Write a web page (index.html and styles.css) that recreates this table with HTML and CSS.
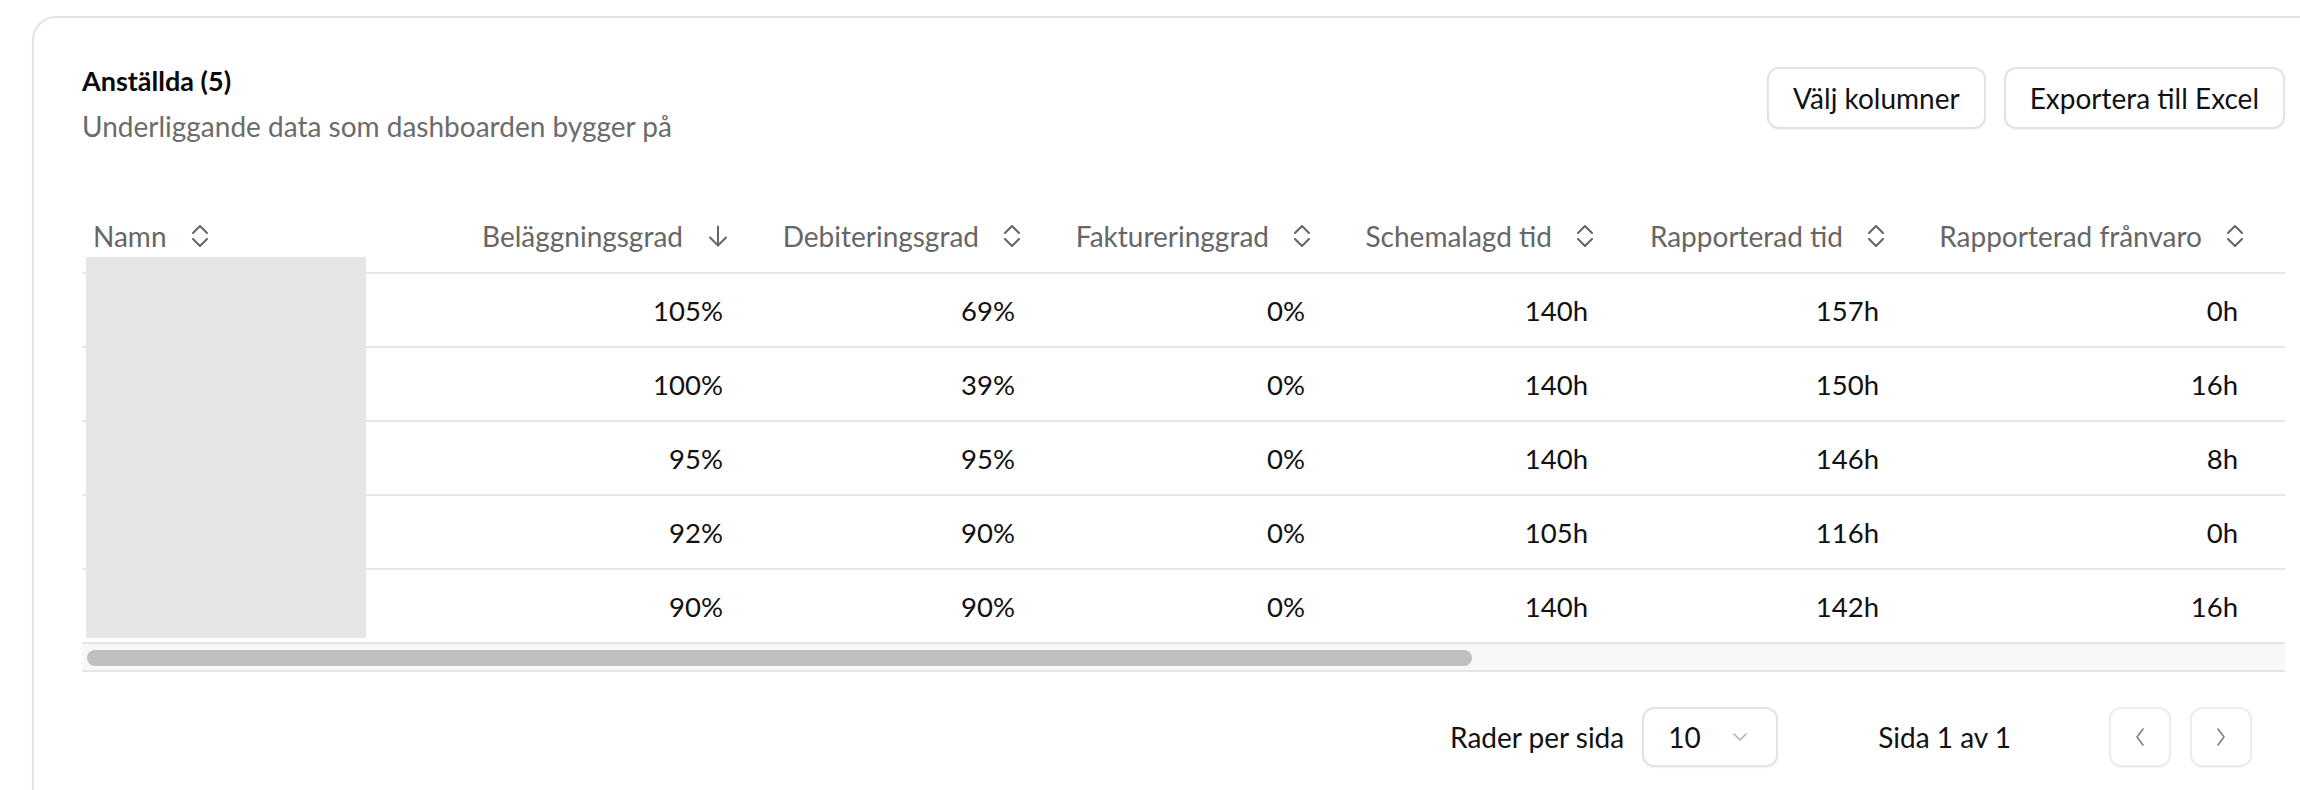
FILE: index.html
```html
<!DOCTYPE html>
<html lang="sv">
<head>
<meta charset="utf-8">
<title>Anställda</title>
<link rel="stylesheet" href="styles.css">
</head>
<body>
<div class="page">
  <section class="card">
    <header class="card-head">
      <div class="heading">
        <h2 class="title">Anställda (5)</h2>
        <p class="subtitle">Underliggande data som dashboarden bygger på</p>
      </div>
      <div class="actions">
        <button class="btn">Välj kolumner</button>
        <button class="btn">Exportera till Excel</button>
      </div>
    </header>

    <div class="table-wrap">
      <div class="scroller">
        <div class="row head-row">
          <div class="hcell name">Namn <svg class="ico-sort" viewBox="0 0 18 24"><polyline points="2,9 9,2 16,9"/><polyline points="2,15 9,22 16,15"/></svg></div>
          <div class="hcell">Beläggningsgrad <svg class="ico-arrow" viewBox="0 0 22 22"><line x1="11" y1="1.5" x2="11" y2="20.5"/><polyline points="3,12.5 11,20.5 19,12.5"/></svg></div>
          <div class="hcell">Debiteringsgrad <svg class="ico-sort" viewBox="0 0 18 24"><polyline points="2,9 9,2 16,9"/><polyline points="2,15 9,22 16,15"/></svg></div>
          <div class="hcell">Faktureringgrad <svg class="ico-sort" viewBox="0 0 18 24"><polyline points="2,9 9,2 16,9"/><polyline points="2,15 9,22 16,15"/></svg></div>
          <div class="hcell">Schemalagd tid <svg class="ico-sort" viewBox="0 0 18 24"><polyline points="2,9 9,2 16,9"/><polyline points="2,15 9,22 16,15"/></svg></div>
          <div class="hcell">Rapporterad tid <svg class="ico-sort" viewBox="0 0 18 24"><polyline points="2,9 9,2 16,9"/><polyline points="2,15 9,22 16,15"/></svg></div>
          <div class="hcell">Rapporterad frånvaro <svg class="ico-sort" viewBox="0 0 18 24"><polyline points="2,9 9,2 16,9"/><polyline points="2,15 9,22 16,15"/></svg></div>
          <div class="hcell"></div>
        </div>
        <div class="row"><div class="cell"></div><div class="cell">105%</div><div class="cell">69%</div><div class="cell">0%</div><div class="cell">140h</div><div class="cell">157h</div><div class="cell">0h</div><div class="cell"></div></div>
        <div class="row"><div class="cell"></div><div class="cell">100%</div><div class="cell">39%</div><div class="cell">0%</div><div class="cell">140h</div><div class="cell">150h</div><div class="cell">16h</div><div class="cell"></div></div>
        <div class="row"><div class="cell"></div><div class="cell">95%</div><div class="cell">95%</div><div class="cell">0%</div><div class="cell">140h</div><div class="cell">146h</div><div class="cell">8h</div><div class="cell"></div></div>
        <div class="row"><div class="cell"></div><div class="cell">92%</div><div class="cell">90%</div><div class="cell">0%</div><div class="cell">105h</div><div class="cell">116h</div><div class="cell">0h</div><div class="cell"></div></div>
        <div class="row"><div class="cell"></div><div class="cell">90%</div><div class="cell">90%</div><div class="cell">0%</div><div class="cell">140h</div><div class="cell">142h</div><div class="cell">16h</div><div class="cell"></div></div>
      </div>
      <div class="redact"></div>
      <div class="hscroll"><div class="thumb"></div></div>
    </div>

    <footer class="pager">
      <span class="pager-label">Rader per sida</span>
      <div class="select"><span>10</span><svg class="ico-down" viewBox="0 0 14 8"><polyline points="1,1 7,7 13,1"/></svg></div>
      <span class="page-info">Sida 1 av 1</span>
      <div class="nav">
        <button class="nav-btn" aria-label="Föregående"><svg viewBox="0 0 10 18"><polyline points="8,1 2,9 8,17"/></svg></button>
        <button class="nav-btn" aria-label="Nästa"><svg viewBox="0 0 10 18"><polyline points="2,1 8,9 2,17"/></svg></button>
      </div>
    </footer>
  </section>
</div>
</body>
</html>
```

FILE: styles.css
```css
html, body {
  margin: 0;
  padding: 0;
  overflow: hidden;
  background: #ffffff;
  font-family: Lato, "Noto Sans", sans-serif;
  color: #111111;
}

.page {
  padding: 16px 0 0 32px;
}

.card {
  width: 2303px;
  box-sizing: border-box;
  border: 2px solid #e3e3e3;
  border-radius: 24px;
  padding: 45px 48px 60px 48px;
  background: #ffffff;
  box-shadow: 0 1px 3px rgba(0, 0, 0, 0.04);
}

.card-head {
  display: flex;
  justify-content: space-between;
  align-items: flex-start;
}

.title {
  margin: 0;
  font-size: 27px;
  font-weight: 700;
  line-height: 36px;
  color: #0a0a0a;
}

.subtitle {
  margin: 9px 0 0;
  font-size: 28px;
  line-height: 36px;
  color: #6b6b6b;
}

.actions {
  display: flex;
  gap: 18px;
  margin-top: 4px;
}

.btn {
  font-family: inherit;
  font-size: 28px;
  line-height: 36px;
  padding: 11px 24px;
  border: 2px solid #e3e3e3;
  border-radius: 12px;
  background: #ffffff;
  color: #111111;
  box-shadow: 0 1px 2px rgba(0, 0, 0, 0.05);
}

.table-wrap {
  position: relative;
  margin-top: 56px;
}

.scroller {
  overflow: hidden;
}

.row {
  display: grid;
  grid-template-columns: 368px 289px 292px 290px 283px 291px 359px 1328px;
  width: 3500px;
}

.cell,
.hcell {
  height: 74px;
  box-sizing: border-box;
  border-bottom: 2px solid #e6e6e6;
  display: flex;
  align-items: center;
  justify-content: flex-end;
  white-space: nowrap;
}

.cell {
  padding-right: 16px;
  font-size: 27.5px;
  color: #111111;
}

.hcell {
  padding-right: 10px;
  gap: 24px;
  font-size: 28px;
  color: #666666;
}

.hcell.name {
  justify-content: flex-start;
  padding-left: 11px;
  padding-right: 0;
}

.ico-sort {
  width: 18px;
  height: 24px;
  fill: none;
  stroke: #666666;
  stroke-width: 2.1;
  stroke-linecap: round;
  stroke-linejoin: round;
  flex: none;
}

.ico-arrow {
  width: 22px;
  height: 22px;
  fill: none;
  stroke: #666666;
  stroke-width: 2;
  stroke-linecap: round;
  stroke-linejoin: round;
  flex: none;
}

.redact {
  position: absolute;
  left: 4px;
  top: 57px;
  width: 280px;
  height: 381px;
  background: #e6e6e6;
}

.hscroll {
  height: 28px;
  box-sizing: border-box;
  background: #f8f8f8;
  border-bottom: 2px solid #e6e6e6;
  padding: 6px 0 0 5px;
}

.thumb {
  width: 1385px;
  height: 16px;
  border-radius: 8px;
  background: #c0c0c0;
}

.pager {
  display: flex;
  justify-content: flex-end;
  align-items: center;
  padding-top: 35px;
  padding-right: 33px;
  font-size: 28px;
  color: #111111;
}

.select {
  margin-left: 18px;
  width: 136px;
  height: 60px;
  box-sizing: border-box;
  border: 2px solid #e3e3e3;
  border-radius: 12px;
  display: flex;
  align-items: center;
  padding-left: 24px;
  gap: 32px;
  box-shadow: 0 1px 2px rgba(0, 0, 0, 0.05);
}

.ico-down {
  width: 14px;
  height: 8px;
  fill: none;
  stroke: #b0b0b0;
  stroke-width: 1.5;
  stroke-linecap: round;
  stroke-linejoin: round;
}

.page-info {
  margin-left: 100px;
}

.nav {
  display: flex;
  gap: 19px;
  margin-left: 98px;
}

.nav-btn {
  width: 62px;
  height: 60px;
  box-sizing: border-box;
  border: 2px solid #ececec;
  border-radius: 12px;
  background: #ffffff;
  display: flex;
  align-items: center;
  justify-content: center;
  padding: 0;
  box-shadow: 0 1px 2px rgba(0, 0, 0, 0.04);
}

.nav-btn svg {
  width: 10px;
  height: 18px;
  fill: none;
  stroke: #808080;
  stroke-width: 1.6;
  stroke-linecap: round;
  stroke-linejoin: round;
}
```
